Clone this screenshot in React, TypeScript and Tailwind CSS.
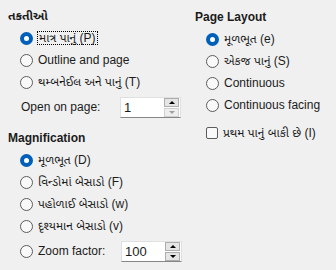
import React from "react";

const font = {
  fontFamily:
    '"Liberation Sans", "Noto Sans Gujarati", "Lohit Gujarati", "Noto Sans", sans-serif',
};

function Radio({ checked, label, focus }: { checked?: boolean; label: string; focus?: boolean }) {
  return (
    <div className="flex h-[22px] items-center gap-[4px]">
      {checked ? (
        <span className="flex h-[13px] w-[13px] shrink-0 items-center justify-center rounded-full bg-[#005fb8]">
          <span className="h-[5px] w-[5px] rounded-full bg-white" />
        </span>
      ) : (
        <span className="h-[13px] w-[13px] shrink-0 rounded-full border border-[#5c5c5c] bg-[#f9f9f9]" />
      )}
      <span
        className={
          focus
            ? "border border-dotted border-black px-[1px] leading-[12px]"
            : "px-[1px] leading-[14px]"
        }
      >
        {label}
      </span>
    </div>
  );
}

function Spin({ value, downDisabled }: { value: string; downDisabled?: boolean }) {
  return (
    <div className="flex h-[21px] w-[61px] items-center justify-between border border-[#e0e0e0] border-b-[#868686] bg-white pl-[3px] pr-[1px]">
      <span className="text-[13px] leading-none">{value}</span>
      <div className="flex flex-col gap-[1px]">
        <div className="flex h-[9px] w-[15px] items-center justify-center border border-[#adadad] bg-[#e5e5e5]">
          <span className="h-0 w-0 border-x-[3px] border-b-[3px] border-x-transparent border-b-black" />
        </div>
        <div
          className={
            downDisabled
              ? "flex h-[9px] w-[15px] items-center justify-center border border-[#d0d0d0] bg-[#eeeeee]"
              : "flex h-[9px] w-[15px] items-center justify-center border border-[#adadad] bg-[#e5e5e5]"
          }
        >
          <span
            className={
              downDisabled
                ? "h-0 w-0 border-x-[3px] border-t-[3px] border-x-transparent border-t-[#a0a0a0]"
                : "h-0 w-0 border-x-[3px] border-t-[3px] border-x-transparent border-t-black"
            }
          />
        </div>
      </div>
    </div>
  );
}

export default function App() {
  return (
    <div
      className="flex h-[270px] w-[336px] bg-[#f0f0f0] text-[12px] text-[#1b1b1b]"
      style={font}
    >
      <div className="flex w-[195px] flex-col pl-[8px] pt-[5px]">
        <div className="flex h-[22px] items-center font-bold">તકતીઓ</div>
        <div className="flex flex-col pl-[12px]">
          <Radio checked focus label="માત્ર પાનું (P)" />
          <Radio label="Outline and page" />
          <Radio label="થમ્બનેઈલ અને પાનું (T)" />
          <div className="flex h-[28px] items-center">
            <span className="w-[100px] pl-[1px]">Open on page:</span>
            <Spin value="1" downDisabled />
          </div>
        </div>
        <div className="mt-[6px] flex h-[22px] items-center font-bold">Magnification</div>
        <div className="flex flex-col pl-[12px]">
          <Radio checked label="મૂળભૂત (D)" />
          <Radio label="વિન્ડોમાં બેસાડો (F)" />
          <Radio label="પહોળાઈ બેસાડો (w)" />
          <Radio label="દૃશ્યમાન બેસાડો (v)" />
          <div className="flex h-[28px] items-center">
            <div className="w-[101px]">
              <Radio label="Zoom factor:" />
            </div>
            <Spin value="100" />
          </div>
        </div>
      </div>
      <div className="flex flex-1 flex-col pt-[6px]">
        <div className="flex h-[22px] items-center font-bold">Page Layout</div>
        <div className="flex flex-col pl-[11px]">
          <Radio checked label="મૂળભૂત (e)" />
          <Radio label="એકજ પાનું (S)" />
          <Radio label="Continuous" />
          <Radio label="Continuous facing" />
          <div className="mt-[6px] flex h-[22px] items-center gap-[4px]">
            <span className="h-[12px] w-[12px] shrink-0 rounded-[2px] border border-[#5c5c5c] bg-[#f9f9f9]" />
            <span className="px-[1px]">પ્રથમ પાનું બાકી છે (I)</span>
          </div>
        </div>
      </div>
    </div>
  );
}
